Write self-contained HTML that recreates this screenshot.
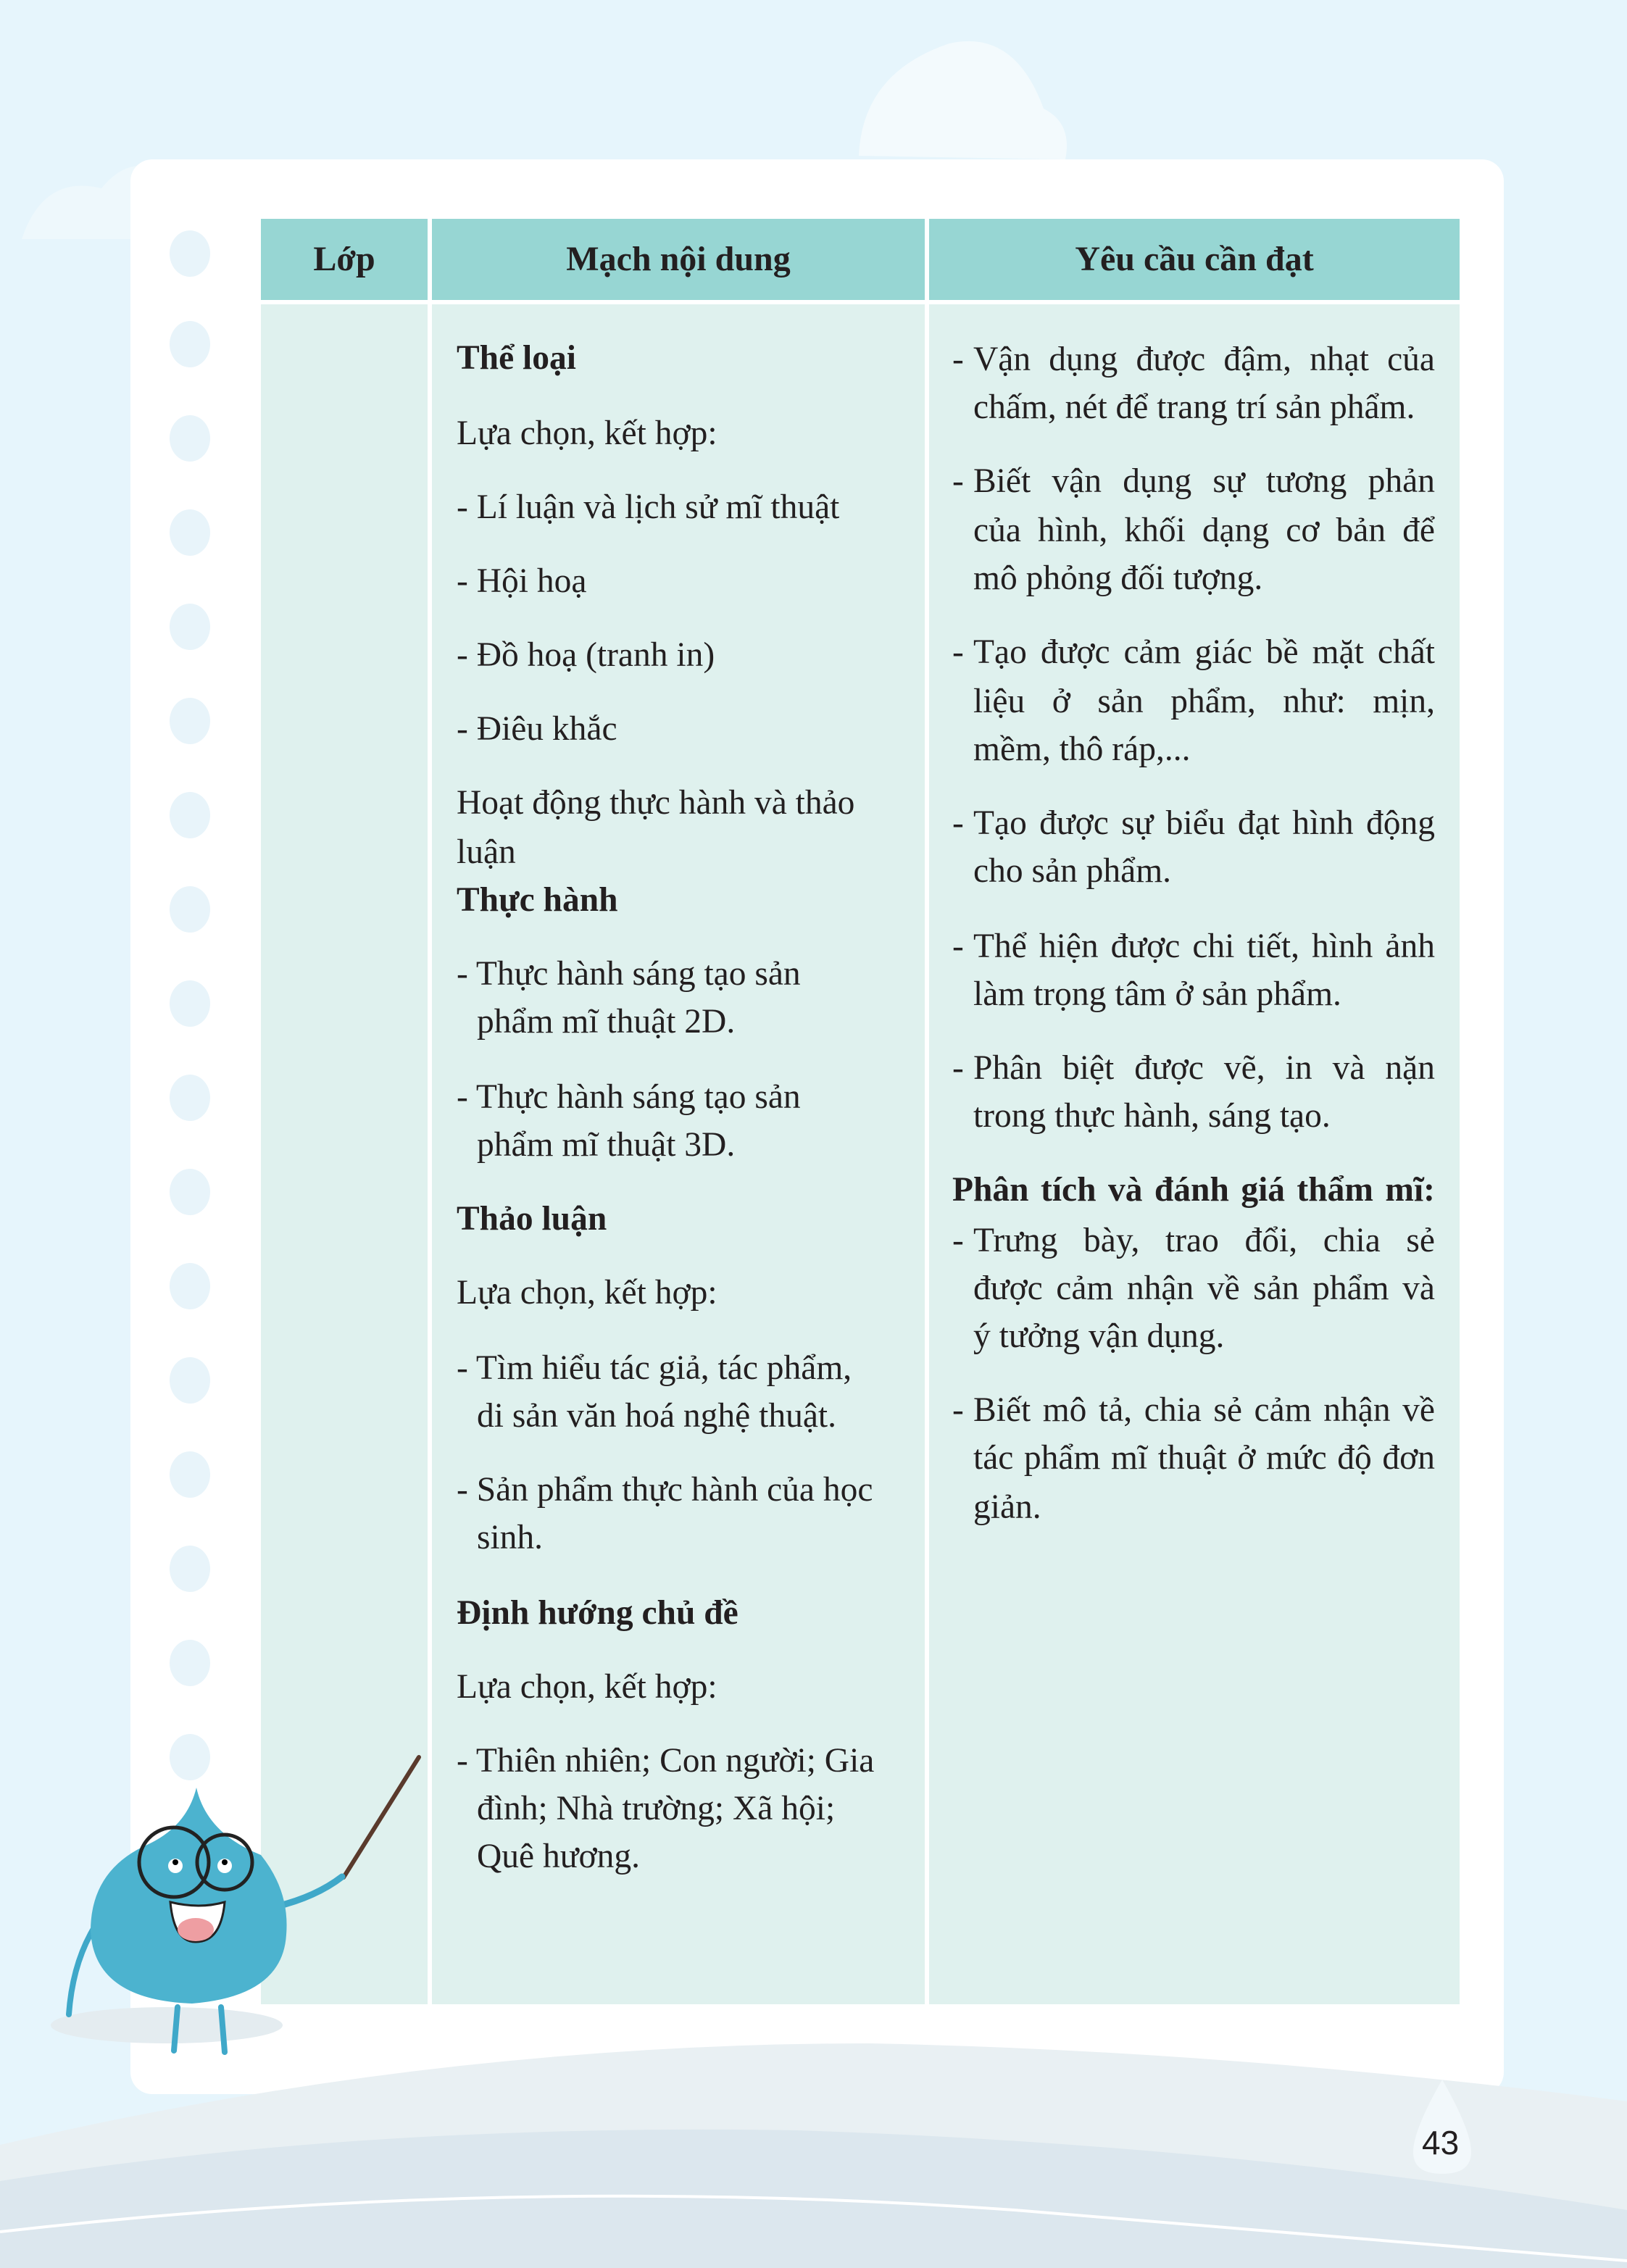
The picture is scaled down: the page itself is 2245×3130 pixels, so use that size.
<!DOCTYPE html>
<html><head><meta charset="utf-8"><style>
*{margin:0;padding:0;box-sizing:border-box}
body{width:2245px;height:3130px;position:relative;overflow:hidden;background:#e6f5fc;font-family:"Liberation Serif",serif;color:#231f20}
.a{position:absolute}
.l{position:absolute;font-size:47.5px;line-height:66px;white-space:nowrap}
.j{text-align:justify;text-align-last:justify;white-space:normal;height:66px;overflow:hidden}
.b{font-weight:bold}
.h{position:absolute;top:302px;height:112px;background:#97d6d3;font-weight:bold;font-size:48px;line-height:112px;text-align:center}
.c{position:absolute;top:420px;height:2346px;background:#dff1ee}
</style></head><body>
<svg class="a" style="left:0;top:0" width="2245" height="3130">
<path d="M1185 215 Q1190 100 1310 60 Q1400 40 1440 150 Q1480 170 1470 220 Z" fill="#f3fafd"/>
<path d="M30 330 Q60 240 140 260 Q180 210 230 240 L230 330 Z" fill="#eef8fc"/>
<rect x="180" y="220" width="1895" height="2670" rx="30" fill="#fff"/>
<path d="M0 3130 L0 2960 Q600 2820 1200 2820 Q1700 2830 2245 2900 L2245 3130 Z" fill="#e9f0f3"/>
<path d="M0 3130 L0 3010 Q500 2930 1100 2940 Q1700 2960 2245 3050 L2245 3130 Z" fill="#dce7ee"/>
<path d="M0 3080 Q700 3000 1400 3050 Q1900 3090 2245 3120" stroke="#fff" stroke-width="4" fill="none"/>
<path d="M1990 2870 Q2030 2940 2030 2970 Q2030 3000 1990 3000 Q1950 3000 1950 2970 Q1950 2940 1990 2870Z" fill="#f2f8fb"/>
<g fill="#e8f4fa">
<ellipse cx="262" cy="350" rx="28" ry="32"/><ellipse cx="262" cy="475" rx="28" ry="32"/><ellipse cx="262" cy="605" rx="28" ry="32"/><ellipse cx="262" cy="735" rx="28" ry="32"/><ellipse cx="262" cy="865" rx="28" ry="32"/><ellipse cx="262" cy="995" rx="28" ry="32"/><ellipse cx="262" cy="1125" rx="28" ry="32"/><ellipse cx="262" cy="1255" rx="28" ry="32"/><ellipse cx="262" cy="1385" rx="28" ry="32"/><ellipse cx="262" cy="1515" rx="28" ry="32"/><ellipse cx="262" cy="1645" rx="28" ry="32"/><ellipse cx="262" cy="1775" rx="28" ry="32"/><ellipse cx="262" cy="1905" rx="28" ry="32"/><ellipse cx="262" cy="2035" rx="28" ry="32"/><ellipse cx="262" cy="2165" rx="28" ry="32"/><ellipse cx="262" cy="2295" rx="28" ry="32"/><ellipse cx="262" cy="2425" rx="28" ry="32"/>
</g>
</svg>
<div class="h" style="left:360px;width:230px">Lớp</div>
<div class="h" style="left:596px;width:680px">Mạch nội dung</div>
<div class="h" style="left:1282px;width:732px">Yêu cầu cần đạt</div>
<div class="c" style="left:360px;width:230px"></div>
<div class="c" style="left:596px;width:680px"></div>
<div class="c" style="left:1282px;width:732px"></div>

<div class="l b" style="left:630px;top:461px">Thể loại</div>
<div class="l" style="left:630px;top:565px">Lựa chọn, kết hợp:</div>
<div class="l" style="left:630px;top:667px">- Lí luận và lịch sử mĩ thuật</div>
<div class="l" style="left:630px;top:769px">- Hội hoạ</div>
<div class="l" style="left:630px;top:871px">- Đồ hoạ (tranh in)</div>
<div class="l" style="left:630px;top:973px">- Điêu khắc</div>
<div class="l" style="left:630px;top:1075px">Hoạt động thực hành và thảo</div>
<div class="l" style="left:630px;top:1143px">luận</div>
<div class="l b" style="left:630px;top:1209px">Thực hành</div>
<div class="l" style="left:630px;top:1311px">- Thực hành sáng tạo sản</div>
<div class="l" style="left:658px;top:1377px">phẩm mĩ thuật 2D.</div>
<div class="l" style="left:630px;top:1481px">- Thực hành sáng tạo sản</div>
<div class="l" style="left:658px;top:1547px">phẩm mĩ thuật 3D.</div>
<div class="l b" style="left:630px;top:1649px">Thảo luận</div>
<div class="l" style="left:630px;top:1751px">Lựa chọn, kết hợp:</div>
<div class="l" style="left:630px;top:1855px">- Tìm hiểu tác giả, tác phẩm,</div>
<div class="l" style="left:658px;top:1921px">di sản văn hoá nghệ thuật.</div>
<div class="l" style="left:630px;top:2023px">- Sản phẩm thực hành của học</div>
<div class="l" style="left:658px;top:2089px">sinh.</div>
<div class="l b" style="left:630px;top:2193px">Định hướng chủ đề</div>
<div class="l" style="left:630px;top:2295px">Lựa chọn, kết hợp:</div>
<div class="l" style="left:630px;top:2397px">- Thiên nhiên; Con người; Gia</div>
<div class="l" style="left:658px;top:2463px">đình; Nhà trường; Xã hội;</div>
<div class="l" style="left:658px;top:2529px">Quê hương.</div>

<div class="l" style="left:1314px;top:463px">-</div><div class="l j" style="left:1343px;top:463px;width:637px">Vận dụng được đậm, nhạt của</div>
<div class="l" style="left:1343px;top:529px">chấm, nét để trang trí sản phẩm.</div>
<div class="l" style="left:1314px;top:631px">-</div><div class="l j" style="left:1343px;top:631px;width:637px">Biết vận dụng sự tương phản</div>
<div class="l j" style="left:1343px;top:699px;width:637px">của hình, khối dạng cơ bản để</div>
<div class="l" style="left:1343px;top:765px">mô phỏng đối tượng.</div>
<div class="l" style="left:1314px;top:867px">-</div><div class="l j" style="left:1343px;top:867px;width:637px">Tạo được cảm giác bề mặt chất</div>
<div class="l j" style="left:1343px;top:935px;width:637px">liệu ở sản phẩm, như: mịn,</div>
<div class="l" style="left:1343px;top:1001px">mềm, thô ráp,...</div>
<div class="l" style="left:1314px;top:1103px">-</div><div class="l j" style="left:1343px;top:1103px;width:637px">Tạo được sự biểu đạt hình động</div>
<div class="l" style="left:1343px;top:1169px">cho sản phẩm.</div>
<div class="l" style="left:1314px;top:1273px">-</div><div class="l j" style="left:1343px;top:1273px;width:637px">Thể hiện được chi tiết, hình ảnh</div>
<div class="l" style="left:1343px;top:1339px">làm trọng tâm ở sản phẩm.</div>
<div class="l" style="left:1314px;top:1441px">-</div><div class="l j" style="left:1343px;top:1441px;width:637px">Phân biệt được vẽ, in và nặn</div>
<div class="l" style="left:1343px;top:1507px">trong thực hành, sáng tạo.</div>
<div class="l b j" style="left:1314px;top:1609px;width:666px">Phân tích và đánh giá thẩm mĩ:</div>
<div class="l" style="left:1314px;top:1679px">-</div><div class="l j" style="left:1343px;top:1679px;width:637px">Trưng bày, trao đổi, chia sẻ</div>
<div class="l j" style="left:1343px;top:1745px;width:637px">được cảm nhận về sản phẩm và</div>
<div class="l" style="left:1343px;top:1811px">ý tưởng vận dụng.</div>
<div class="l" style="left:1314px;top:1913px">-</div><div class="l j" style="left:1343px;top:1913px;width:637px">Biết mô tả, chia sẻ cảm nhận về</div>
<div class="l j" style="left:1343px;top:1979px;width:637px">tác phẩm mĩ thuật ở mức độ đơn</div>
<div class="l" style="left:1343px;top:2047px">giản.</div>

<svg class="a" style="left:0;top:2380px" width="700" height="480">
<ellipse cx="230" cy="415" rx="160" ry="25" fill="#e4ecf0"/>
<line x1="474" y1="211" x2="578" y2="45" stroke="#5a3a2c" stroke-width="6" stroke-linecap="round"/>
<path d="M330 260 Q420 250 472 210" stroke="#3fa8c9" stroke-width="9" fill="none" stroke-linecap="round"/>
<path d="M130 280 Q100 330 95 400" stroke="#3fa8c9" stroke-width="8" fill="none" stroke-linecap="round"/>
<path d="M245 390 L240 450 M305 390 L310 452" stroke="#3fa8c9" stroke-width="8" fill="none" stroke-linecap="round"/>
<path d="M271 87 Q285 150 360 180 Q400 230 395 290 Q390 375 265 385 Q130 380 125 285 Q125 200 205 165 Q258 140 271 87Z" fill="#4cb3cf"/>
<circle cx="240" cy="190" r="48" fill="none" stroke="#222" stroke-width="5"/>
<circle cx="310" cy="190" r="38" fill="none" stroke="#222" stroke-width="5"/>
<circle cx="242" cy="195" r="10" fill="#fff"/><circle cx="310" cy="195" r="10" fill="#fff"/>
<circle cx="242" cy="190" r="4" fill="#000"/><circle cx="310" cy="190" r="4" fill="#000"/>
<path d="M235 245 Q275 255 310 245 Q305 300 270 300 Q240 300 235 245Z" fill="#fff" stroke="#222" stroke-width="3"/>
<ellipse cx="270" cy="283" rx="25" ry="16" fill="#ee9ea2"/>
</svg>
<div class="a" style="left:1962px;top:2930px;font-family:'Liberation Sans',sans-serif;font-size:46px;color:#231f20">43</div>
</body></html>
